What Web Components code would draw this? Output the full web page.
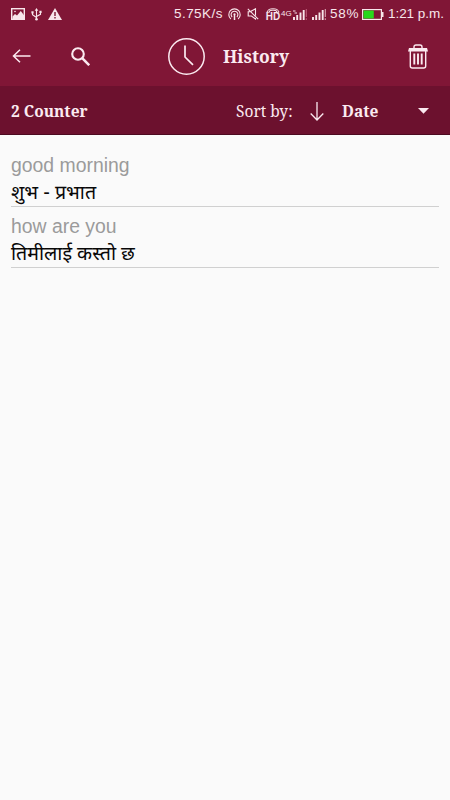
<!DOCTYPE html>
<html lang="en">
<head>
<meta charset="utf-8">
<title>History</title>
<style>
  body {
    margin: 0;
    background: #fafafa;
    font-family: "Liberation Sans", Arial, sans-serif;
  }
</style>
</head>
<body>
<history-page></history-page>

<script>
const icons = {
  photo: '<rect x=".7" y=".7" width="12.6" height="10.6" fill="none" stroke="currentColor" stroke-width="1.4"/><path d="M1.5 8.5 4 6l2 1.500L9.800 3l3.200 4.200V11H1.500z" fill="currentColor"/><circle cx="4" cy="3.500" r=".8" fill="currentColor"/>',
  usb: '<g fill="none" stroke="currentColor" stroke-width="1.1"><path d="M5.5 2v9M1.5 4.5v2.2l4 2.8M9.5 4v2.3l-4 2.2"/></g><path d="M5.5 0 7.3 2.7H3.7zM.4 3.2h2.2v2.2H.4zM8.4 2.7h2.2v2.2H8.4z" fill="currentColor"/><circle cx="5.5" cy="11.3" r="1.3" fill="currentColor"/>',
  warning: '<path d="M7 0l7 12H0z" fill="currentColor"/><path d="M7 4v4M7 9v1.5" stroke="#7b1735" stroke-width="1.4"/>',
  hotspot: '<g fill="none" stroke="currentColor" stroke-width="1.1"><path d="M2.900 11a5.700 5.700 0 1 1 7.200 0"/><path d="M4.100 9a3.400 3.400 0 1 1 4.800 0"/><path d="M6.500 6.500V12" stroke-width="1.5"/></g><circle cx="6.500" cy="6.300" r="1.100" fill="currentColor"/>',
  mute: '<g fill="none" stroke="currentColor" stroke-width="1.1"><path d="M4 3.3 8.5.8v6.7M8.5 10v1L4.5 8H1.2V3.8h2M.8.8l10.4 10.4"/></g>',
  handset: '<path d="M1 4.200C1.500 1.600 4 .8 7 .8s5.500.8 6 3.400h-2.600V2.700Q7 1.700 3.600 2.700v1.500z" fill="none" stroke="currentColor" stroke-width="1"/>',
  signal: '<path d="M1 8v3M4.200 6v5M7.500 3.500V11M10.700 1v10" stroke="currentColor" stroke-width="1.900"/><path d="M13.300 0v8M13.300 9.300V11" stroke="#d8a6b3" stroke-width="1.100"/>',
  signal4g: '<path d="M1 8v3M4.200 6v5M7.500 3.500V11M10.700 1v10" stroke="currentColor" stroke-width="1.900"/><path d="M13.300 0v8M13.300 9.300V11" stroke="#c0627d" stroke-width="1"/><path d="M0 2h2.500M1.500 4H4" stroke="currentColor" stroke-width="1"/>',
  battery: '<rect x=".6" y=".6" width="18.800" height="9.800" fill="none" stroke="currentColor" stroke-width="1.200"/><path d="M20 3h1.500v5H20z" fill="currentColor"/><path d="M1.500 1.500h10.300v8H1.500z" fill="#28d81b"/>',
  back: '<path d="M18.500 7H1.500M8 .7 1.500 7 8 13.300" fill="none" stroke="currentColor" stroke-width="1.500"/>',
  search: '<circle cx="7" cy="7" r="5.800" fill="none" stroke="currentColor" stroke-width="2.100"/><path d="m11.200 11.200 7 7" stroke="currentColor" stroke-width="2.500"/>',
  clock: '<circle cx="18.500" cy="18.500" r="17.700" fill="none" stroke="currentColor" stroke-width="1.500"/><path d="M17 7.500V19l8 7.800" fill="none" stroke="currentColor" stroke-width="1.700"/>',
  trash: '<g fill="none" stroke="currentColor" stroke-width="1.400"><path d="M6 5V3q0-2 2-2h4q2 0 2 2v2M2.300 6.500V22q0 2 2 2h11.400q2 0 2-2V6.500"/><path d="M6.300 9.500v11M10 9.500v11M13.700 9.500v11" stroke-width="1.900"/></g><path d="M1 4h18l1 3.500H0z" fill="currentColor"/>',
  down: '<path d="M7 0v18M.700 11.500 7 18l6.300-6.500" fill="none" stroke="currentColor" stroke-width="1.300"/>',
  caret: '<path d="M0 0h11L5.500 5.800z" fill="currentColor"/>'
};

class AppIcon extends HTMLElement {
  constructor() {
    super();
    this.attachShadow({ mode: 'open' });
  }

  connectedCallback() {
    const width = this.getAttribute('width');
    const height = this.getAttribute('height');

    this.shadowRoot.innerHTML = `
      <style>
        :host { display: block; flex: none; width: ${width}px; height: ${height}px; }
        svg { display: block; }
      </style>
      <svg width="${width}" height="${height}" viewBox="0 0 ${width} ${height}">${icons[this.getAttribute('name')]}</svg>
    `;
  }
}

class StatusBar extends HTMLElement {
  constructor() {
    super();
    this.attachShadow({ mode: 'open' }).innerHTML = `
      <style>
        :host {
          display: flex;
          align-items: center;
          box-sizing: border-box;
          height: 28px;
          padding-left: 11px;
          color: #f8e6eb;
          font: 13.5px/28px "Liberation Sans", Arial, sans-serif;
          white-space: nowrap;
        }
        .left { display: flex; gap: 6px; width: 163px; }
        .speed { width: 54px; letter-spacing: .45px; }
        .hd { width: 16px; margin-left: 6px; font-size: 10px; font-weight: bold; line-height: 8px; text-align: center; }
        .hd span { display: block; }
        .net { width: 12px; font-size: 8px; }
        .percent { width: 32px; margin-left: 4px; letter-spacing: .7px; }
        .time { margin-left: 4px; letter-spacing: -.05px; }
      </style>
      <div class="left">
        <app-icon name="photo" width="14" height="12"></app-icon>
        <app-icon name="usb" width="11" height="13"></app-icon>
        <app-icon name="warning" width="14" height="12"></app-icon>
      </div>
      <span class="speed">5.75K/s</span>
      <app-icon name="hotspot" width="13" height="12"></app-icon>
      <app-icon name="mute" width="12" height="12" style="margin-left:6px"></app-icon>
      <div class="hd"><app-icon name="handset" width="14" height="5" style="margin:auto"></app-icon><span>HD</span></div>
      <span class="net">4G</span>
      <app-icon name="signal4g" width="14" height="11"></app-icon>
      <app-icon name="signal" width="14" height="11" style="margin-left:5px"></app-icon>
      <span class="percent">58%</span>
      <app-icon name="battery" width="22" height="11"></app-icon>
      <span class="time">1:21 p.m.</span>
    `;
  }
}

class TitleBar extends HTMLElement {
  constructor() {
    super();
    this.attachShadow({ mode: 'open' }).innerHTML = `
      <style>
        :host {
          display: flex;
          align-items: center;
          box-sizing: border-box;
          height: 58px;
          padding: 0 22px 2px 12px;
          color: #fbeaf0;
        }
        .search { margin-left: 40px; }
        .clock { margin-left: 78px; }
        h1 { flex: 1; margin: 0 0 0 18px; font: bold 17.5px/28px "Noto Serif", "Droid Serif", "DejaVu Serif Condensed", serif; }
      </style>
      <app-icon name="back" width="19" height="14"></app-icon>
      <app-icon class="search" name="search" width="19" height="19"></app-icon>
      <app-icon class="clock" name="clock" width="37" height="37"></app-icon>
      <h1><slot></slot></h1>
      <app-icon name="trash" width="20" height="25"></app-icon>
    `;
  }
}

class SortBar extends HTMLElement {
  constructor() {
    super();
    this.attachShadow({ mode: 'open' }).innerHTML = `
      <style>
        :host {
          display: flex;
          align-items: center;
          box-sizing: border-box;
          height: 49px;
          padding: 2px 21px 0 11px;
          border-bottom: 1px solid #4c0a20;
          background: #6c112e;
          color: #fbeaf0;
          font: 15.5px/24px "Noto Serif", "Droid Serif", "DejaVu Serif Condensed", serif;
          white-space: nowrap;
        }
        .count { width: 225px; font-weight: bold; }
        .label { width: 74px; }
        .value { flex: 1; margin-left: 18px; font-weight: bold; }
      </style>
      <span class="count"><slot name="count"></slot></span>
      <span class="label">Sort by:</span>
      <app-icon name="down" width="14" height="19"></app-icon>
      <span class="value"><slot name="value"></slot></span>
      <app-icon name="caret" width="11" height="6"></app-icon>
    `;
  }
}

class HistoryItem extends HTMLElement {
  constructor() {
    super();
    this.attachShadow({ mode: 'open' }).innerHTML = `
      <style>
        :host {
          display: block;
          box-sizing: border-box;
          height: 61px;
          padding-top: 7px;
          border-bottom: 1px solid #d0d0d0;
        }
        .source { color: #9b9b9b; font-size: 19.4px; line-height: 25px; }
        .target { color: #080808; font: 19.6px/32px "Noto Sans Devanagari", "Noto Sans", sans-serif; }
      </style>
      <div class="source"><slot name="source"></slot></div>
      <div class="target" lang="ne"><slot name="target"></slot></div>
    `;
  }
}

class HistoryPage extends HTMLElement {
  constructor() {
    super();
    this.attachShadow({ mode: 'open' }).innerHTML = `
      <style>
        :host { display: block; height: 800px; overflow: hidden; background: #fafafa; }
        header { background: #801636; }
        main { padding: 11px 11px 0; }
      </style>
      <header>
        <status-bar></status-bar>
        <title-bar>History</title-bar>
        <sort-bar>
          <span slot="count">2 Counter</span>
          <span slot="value">Date</span>
        </sort-bar>
      </header>
      <main>
        <history-item>
          <span slot="source">good morning</span>
          <span slot="target">शुभ - प्रभात</span>
        </history-item>
        <history-item>
          <span slot="source">how are you</span>
          <span slot="target">तिमीलाई कस्तो छ</span>
        </history-item>
      </main>
    `;
  }
}

customElements.define('app-icon', AppIcon);
customElements.define('status-bar', StatusBar);
customElements.define('title-bar', TitleBar);
customElements.define('sort-bar', SortBar);
customElements.define('history-item', HistoryItem);
customElements.define('history-page', HistoryPage);
</script>
</body>
</html>
